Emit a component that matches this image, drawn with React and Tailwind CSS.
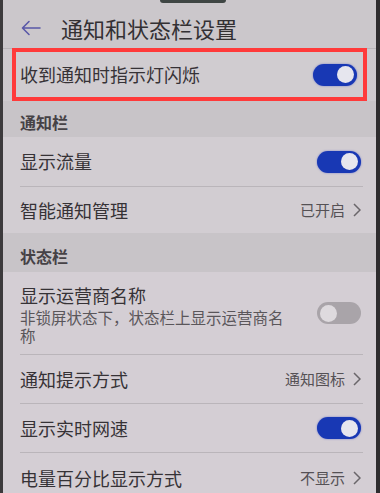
import React from "react";

const font = { fontFamily: '"Noto Sans CJK SC", "Noto Sans", sans-serif' };

function Toggle({ on }) {
  return on ? (
    <div className="w-[44px] h-[22px] rounded-full bg-[#1838b4] flex items-center justify-end pr-[3px] shadow-[0_0_2px_rgba(40,60,200,0.6)]">
      <div className="w-[17px] h-[17px] rounded-full bg-[#e6e6ee]" />
    </div>
  ) : (
    <div className="w-[44px] h-[22px] rounded-full bg-[#a9a4a9] flex items-center justify-start pl-[3px]">
      <div className="w-[17px] h-[17px] rounded-full bg-[#dedade]" />
    </div>
  );
}

function Chevron() {
  return (
    <svg width="8" height="14" viewBox="0 0 8 14" className="ml-[8px]">
      <polyline points="1,1 7,7 1,13" fill="none" stroke="#6a666a" strokeWidth="1.5" />
    </svg>
  );
}

function Value({ text }) {
  return (
    <div className="flex items-center text-[15px] text-[#555155]">
      <span>{text}</span>
      <Chevron />
    </div>
  );
}

function Row({ title, right, h, divider = true }) {
  return (
    <div className={`flex flex-col shrink-0 ${h}`}>
      <div className="flex-1 flex items-center justify-between pl-[17px] pr-[15px]">
        <span className="text-[18px] text-[#363236]">{title}</span>
        {right}
      </div>
      {divider && <div className="ml-[17px] mr-[13px] h-px bg-[#bab5ba]" />}
    </div>
  );
}

function Section({ title, h }) {
  return (
    <div className={`flex items-center pl-[17px] pt-[6px] bg-[#c8c4c8] shrink-0 ${h}`}>
      <span className="text-[16px] font-bold text-[#464246]">{title}</span>
    </div>
  );
}

export default function App() {
  return (
    <div
      style={font}
      className="relative w-[380px] h-[493px] overflow-hidden flex flex-col border-l-[3px] border-r-[4px] border-l-[#3c3a3c] border-r-[#2e2c2e] bg-gradient-to-b from-[#ccc8cc] to-[#d6cfd6]"
    >
      <div className="absolute top-0 left-[157px] w-[66px] h-[3px] rounded-b-full bg-[#3f4644]" />

      {/* header */}
      <div className="h-[49px] flex items-center pl-[18px] pt-[8px] bg-[#cbc7cb] border-b border-[#b8b4b8] shrink-0">
        <svg width="20" height="16" viewBox="0 0 20 16">
          <path d="M19 8H2M8 1.5L1.5 8 8 14.5" fill="none" stroke="#5a58a8" strokeWidth="1.6" strokeLinecap="round" strokeLinejoin="round" />
        </svg>
        <span className="ml-[20px] text-[22px] text-[#333033] leading-none">通知和状态栏设置</span>
      </div>

      {/* highlighted row */}
      <div className="mx-[9px] -mt-px h-[53px] border-4 border-[#ff3a3a] bg-[#d0ccd0] flex items-center justify-between pl-[4px] pr-[6px] shrink-0">
        <span className="text-[18px] text-[#363236]">收到通知时指示灯闪烁</span>
        <Toggle on />
      </div>

      <Section title="通知栏" h="h-[36px]" />
      <div className="bg-[#d2cdd2] flex flex-col shrink-0">
        <Row title="显示流量" right={<Toggle on />} h="h-[50px]" />
        <Row title="智能通知管理" right={<Value text="已开启" />} h="h-[46px]" divider={false} />
      </div>

      <Section title="状态栏" h="h-[39px]" />
      <div className="bg-[#d4ced4] flex flex-col shrink-0">
        <div className="flex flex-col h-[83px] shrink-0">
          <div className="flex-1 flex items-center justify-between pl-[17px] pr-[15px]">
            <div className="flex flex-col w-[275px]">
              <span className="text-[18px] text-[#363236] leading-[26px]">显示运营商名称</span>
              <span className="text-[15.5px] text-[#5a565a] leading-[18px]">非锁屏状态下，状态栏上显示运营商名称</span>
            </div>
            <Toggle on={false} />
          </div>
          <div className="ml-[17px] mr-[13px] h-px bg-[#bab5ba]" />
        </div>
        <Row title="通知提示方式" right={<Value text="通知图标" />} h="h-[49px]" />
        <Row title="显示实时网速" right={<Toggle on />} h="h-[49px]" />
        <Row title="电量百分比显示方式" right={<Value text="不显示" />} h="h-[50px]" divider={false} />
      </div>
    </div>
  );
}
